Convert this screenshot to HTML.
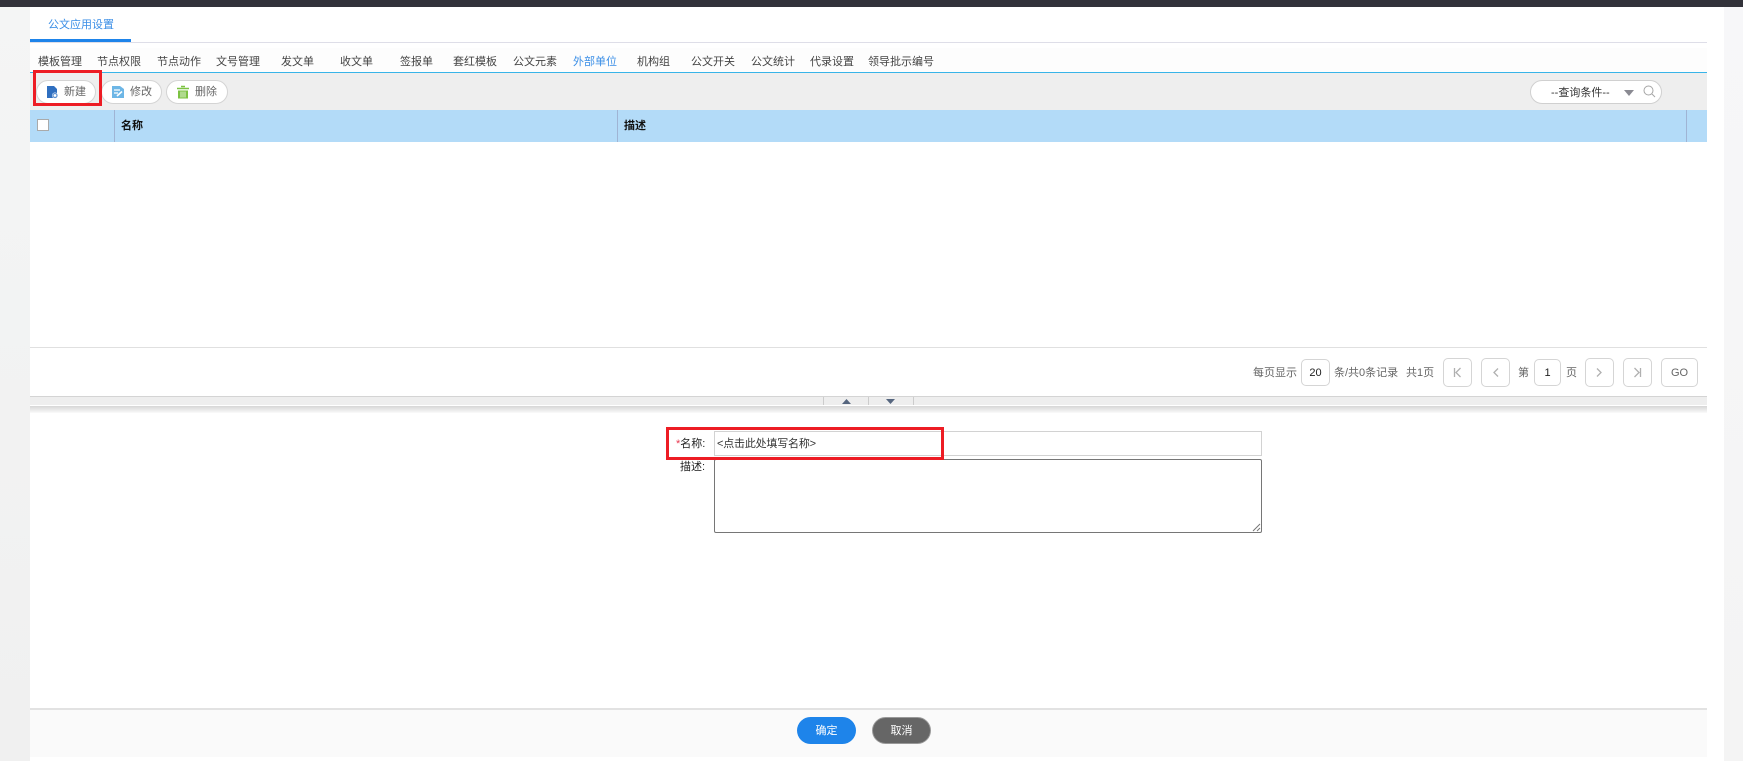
<!DOCTYPE html>
<html lang="zh"><head><meta charset="utf-8"><title>公文应用设置</title>
<style>
html,body{margin:0;padding:0;width:1743px;height:761px;overflow:hidden;background:#fff}
body{position:relative;font:11px/16px "Liberation Sans","Noto Sans CJK SC",sans-serif;color:#333}
div,span,svg{position:absolute;box-sizing:border-box}
span{white-space:nowrap}
.n{top:54px;color:#444}
.b{top:80px;height:24px;border:1px solid #d4d4d4;border-radius:12px;background:#fff}
.bt{top:84px;color:#666}
.pt{top:365px;color:#666}
.pb{top:358px;height:29px;width:29px;border:1px solid #d5d5d5;border-radius:5px;background:#fff}
.red{border:3px solid #ed1c24}
.btn{top:717px;height:27px;width:59px;border-radius:14px;color:#fff;text-align:center;line-height:29px}
</style></head><body>
<div style="left:0;top:0;width:30px;height:761px;background:linear-gradient(#f4f5f5,#f0f0f0)"></div>
<div style="left:1724px;top:7px;width:19px;height:754px;background:linear-gradient(#f7f7f9,#f4f4f4)"></div>
<div style="left:0;top:0;width:1743px;height:7px;background:#32323a"></div>

<div style="left:30px;top:42px;width:1677px;height:1px;background:#dedee8"></div>
<div style="left:30px;top:39px;width:101px;height:3px;background:#1e84ea"></div>
<span style="left:48px;top:17px;color:#3a8ee6">公文应用设置</span>

<div style="left:30px;top:48px;width:1677px;height:24px;background:#fdfdfd"></div>
<span class="n" style="left:38px">模板管理</span>
<span class="n" style="left:97px">节点权限</span>
<span class="n" style="left:157px">节点动作</span>
<span class="n" style="left:216px">文号管理</span>
<span class="n" style="left:281px">发文单</span>
<span class="n" style="left:340px">收文单</span>
<span class="n" style="left:400px">签报单</span>
<span class="n" style="left:453px">套红模板</span>
<span class="n" style="left:513px">公文元素</span>
<span class="n" style="left:573px;color:#3a8ee6">外部单位</span>
<span class="n" style="left:637px">机构组</span>
<span class="n" style="left:691px">公文开关</span>
<span class="n" style="left:751px">公文统计</span>
<span class="n" style="left:810px">代录设置</span>
<span class="n" style="left:868px">领导批示编号</span>

<div style="left:30px;top:72px;width:1677px;height:1px;background:#38b4e8"></div>
<div style="left:30px;top:73px;width:1677px;height:37px;background:#eee"></div>

<div class="b" style="left:36px;width:60px"></div>
<svg style="left:46px;top:85px" width="13" height="14" viewBox="0 0 13 14"><path d="M1 1H8L11 4V13H1Z" fill="#2f6fc0"/><circle cx="9" cy="10.5" r="3" fill="#fff"/><circle cx="9" cy="10.5" r="2" fill="none" stroke="#5a8fd0" stroke-width="1.200"/></svg>
<span class="bt" style="left:64px">新建</span>
<div class="b" style="left:101px;width:61px"></div>
<svg style="left:111px;top:85px" width="14" height="14" viewBox="0 0 14 14"><path d="M1 1H9L13 4V13H1Z" fill="#6db6e6"/><path d="M3 5H9M3 8H7" stroke="#fff" stroke-width="1.2"/><path d="M6 11L11 6.500" stroke="#fff" stroke-width="1.600"/></svg>
<span class="bt" style="left:130px">修改</span>
<div class="b" style="left:166px;width:62px"></div>
<svg style="left:176px;top:85px" width="14" height="14" viewBox="0 0 14 14"><path d="M5 1.500H9M1 3.500H13" stroke="#7cc242" stroke-width="1.600"/><path d="M2 5.500H12V13.500H2Z" fill="#7cc242"/><path d="M5 6.500V12.500M7 6.500V12.500M9 6.500V12.500" stroke="#fff" stroke-width=".8"/></svg>
<span class="bt" style="left:195px">删除</span>

<div style="left:1530px;top:80px;width:132px;height:24px;border:1px solid #d0d0d0;border-radius:12px;background:#fff"></div>
<span style="left:1551px;top:85px;color:#333">--查询条件--</span>
<svg style="left:1624px;top:89px" width="10" height="8" viewBox="0 0 10 8"><path d="M0 1H10L5 7Z" fill="#8a8a92"/></svg>
<svg style="left:1643px;top:85px" width="13" height="13" viewBox="0 0 13 13"><circle cx="5.500" cy="5.500" r="4.500" fill="none" stroke="#a5a5a5" stroke-width="1"/><path d="M9 9L12 12" stroke="#a5a5a5" stroke-width="1"/></svg>

<div style="left:30px;top:110px;width:1677px;height:32px;background:#b3dbf8"></div>
<div style="left:37px;top:119px;width:12px;height:12px;background:#fff;border:1px solid #aaa"></div>
<div style="left:114px;top:110px;width:1px;height:32px;background:#9fb4d4"></div>
<div style="left:617px;top:110px;width:1px;height:32px;background:#9fb4d4"></div>
<div style="left:1686px;top:110px;width:1px;height:32px;background:#9fb4d4"></div>
<span style="left:121px;top:118px;color:#111;font-weight:bold">名称</span>
<span style="left:624px;top:118px;color:#111;font-weight:bold">描述</span>

<div style="left:30px;top:347px;width:1677px;height:1px;background:#e0e0e0"></div>
<span class="pt" style="left:1253px">每页显示</span>
<div class="pb" style="left:1301px;top:359px;height:27px;text-align:center;line-height:26px;color:#222">20</div>
<span class="pt" style="left:1334px">条/共0条记录</span>
<span class="pt" style="left:1406px">共1页</span>
<div class="pb" style="left:1443px"></div>
<svg style="left:1453px;top:367px" width="9" height="11" viewBox="0 0 9 11"><path d="M1.500 1V10M7.500 1L3 5.500L7.500 10" fill="none" stroke="#b0b0b0" stroke-width="1.300"/></svg>
<div class="pb" style="left:1481px"></div>
<svg style="left:1491px;top:367px" width="9" height="11" viewBox="0 0 9 11"><path d="M7 1.500L3 5.500L7 9.500" fill="none" stroke="#b0b0b0" stroke-width="1.300"/></svg>
<span class="pt" style="left:1518px">第</span>
<div class="pb" style="left:1534px;top:359px;height:27px;width:27px;text-align:center;line-height:26px;color:#222">1</div>
<span class="pt" style="left:1566px">页</span>
<div class="pb" style="left:1585px"></div>
<svg style="left:1595px;top:367px" width="9" height="11" viewBox="0 0 9 11"><path d="M2 1.500L6 5.500L2 9.500" fill="none" stroke="#b0b0b0" stroke-width="1.300"/></svg>
<div class="pb" style="left:1623px"></div>
<svg style="left:1633px;top:367px" width="9" height="11" viewBox="0 0 9 11"><path d="M7.500 1V10M1.500 1L6 5.500L1.500 10" fill="none" stroke="#b0b0b0" stroke-width="1.300"/></svg>
<div class="pb" style="left:1661px;width:37px;text-align:center;line-height:28px;color:#666">GO</div>

<div style="left:30px;top:396px;width:1677px;height:1px;background:#d4d4d4"></div>
<div style="left:30px;top:397px;width:1677px;height:8px;background:#eee"></div>
<div style="left:30px;top:405px;width:1677px;height:1px;background:#fff"></div>
<div style="left:30px;top:406px;width:1677px;height:7px;background:linear-gradient(#d6d6d6,#fafafa)"></div>
<div style="left:823px;top:397px;width:1px;height:8px;background:#ccc"></div>
<div style="left:868px;top:397px;width:1px;height:8px;background:#ccc"></div>
<div style="left:913px;top:397px;width:1px;height:8px;background:#ccc"></div>
<svg style="left:842px;top:399px" width="9" height="5" viewBox="0 0 9 5"><path d="M0 5H9L4.500 0Z" fill="#56667f"/></svg>
<svg style="left:886px;top:399px" width="9" height="5" viewBox="0 0 9 5"><path d="M0 0H9L4.500 5Z" fill="#56667f"/></svg>

<span style="left:676px;top:436px;color:#222"><span style="position:static;color:#e8384f">*</span>名称:</span>
<span style="left:680px;top:459px;color:#222">描述:</span>
<div style="left:714px;top:431px;width:548px;height:25px;border:1px solid #d2d2d2;background:#fff"></div>
<span style="left:717px;top:436px;color:#333;letter-spacing:-.2px">&lt;点击此处填写名称&gt;</span>
<div style="left:714px;top:459px;width:548px;height:74px;border:1px solid #767676;border-radius:2px;background:#fff"></div>
<svg style="left:1251px;top:522px" width="10" height="10" viewBox="0 0 10 10"><path d="M9 2L2 9M9 6L6 9" stroke="#777" stroke-width="1"/></svg>

<div class="red" style="left:33px;top:70px;width:69px;height:36px"></div>
<div class="red" style="left:666px;top:427px;width:278px;height:33px"></div>

<div style="left:30px;top:708px;width:1677px;height:2px;background:#e2e2e2"></div>
<div style="left:30px;top:710px;width:1677px;height:47px;background:#fafafa"></div>
<div class="btn" style="left:797px;background:#1e84ea">确定</div>
<div class="btn" style="left:872px;background:#666;border:1px solid #999;line-height:27px">取消</div>
</body></html>
